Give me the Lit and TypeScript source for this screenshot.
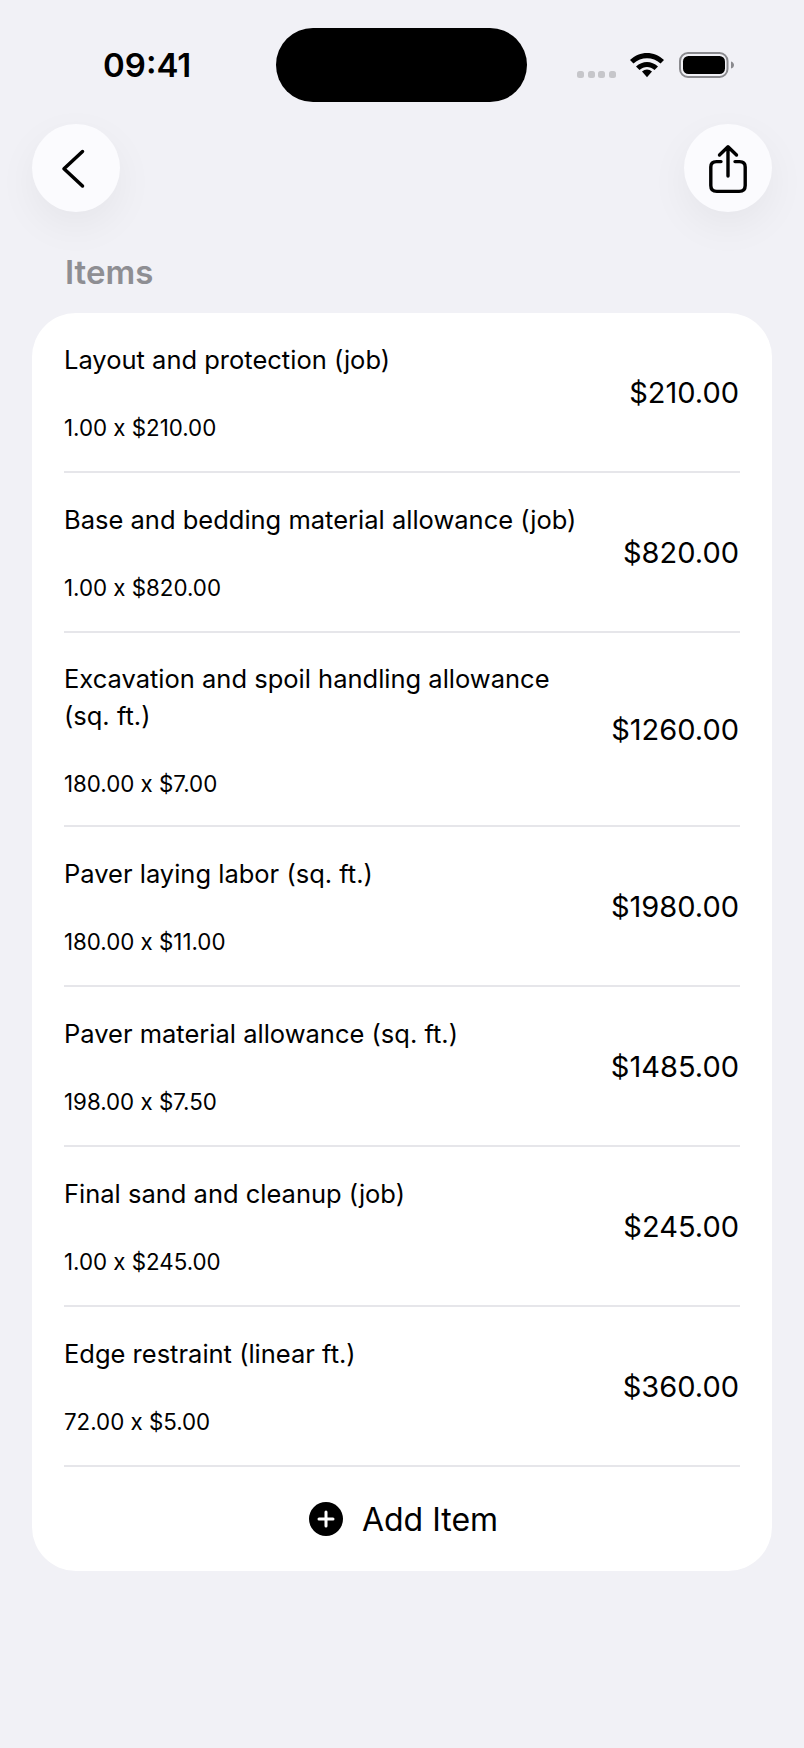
import { LitElement, html, css } from "lit";
import { customElement } from "lit/decorators.js";

const items = [
  { t: "Layout and protection (job)", s: "1.00 x $210.00", p: "$210.00" },
  { t: "Base and bedding material allowance (job)", s: "1.00 x $820.00", p: "$820.00" },
  { t: "Excavation and spoil handling allowance (sq. ft.)", s: "180.00 x $7.00", p: "$1260.00", two: true },
  { t: "Paver laying labor (sq. ft.)", s: "180.00 x $11.00", p: "$1980.00" },
  { t: "Paver material allowance (sq. ft.)", s: "198.00 x $7.50", p: "$1485.00" },
  { t: "Final sand and cleanup (job)", s: "1.00 x $245.00", p: "$245.00" },
  { t: "Edge restraint (linear ft.)", s: "72.00 x $5.00", p: "$360.00" },
];

@customElement("app-root")
export class AppRoot extends LitElement {
  static styles = css`
    :host {
      display: block;
      width: 804px;
      height: 1748px;
      background: #f1f1f6;
      font-family: Inter, "Liberation Sans", sans-serif;
      color: #000;
      overflow: hidden;
    }
    .status {
      display: flex;
      align-items: center;
      height: 74px;
      padding: 28px 0 0 103px;
    }
    .time {
      width: 173px;
      font-size: 33px;
      font-weight: 600;
      line-height: 74px;
    }
    .island {
      width: 251px;
      height: 74px;
      border-radius: 37px;
      background: #000;
    }
    .sys {
      display: flex;
      align-items: center;
      margin-left: 50px;
    }
    .dots {
      display: flex;
      gap: 3.5px;
      margin-top: 18px;
      margin-right: 14.5px;
    }
    .dots i {
      width: 7px;
      height: 7px;
      border-radius: 2.5px;
      background: #c6c6ca;
    }
    .wifi { display: block; margin-right: 15px; }
    .battery { display: block; }
    .nav {
      display: flex;
      justify-content: space-between;
      padding: 22px 32px 0;
    }
    .circle {
      width: 88px;
      height: 88px;
      border-radius: 50%;
      background: #fbfbfe;
      box-shadow: 0 14px 40px rgba(0, 0, 0, 0.05);
      display: flex;
      align-items: center;
      justify-content: center;
    }
    .heading {
      margin: 37px 0 0 65px;
      font-size: 33px;
      font-weight: 600;
      line-height: 46px;
      color: #8e8e93;
    }
    .card {
      margin: 18px 32px 0;
      background: #fff;
      border-radius: 44px;
      padding: 0 32px;
    }
    .row {
      display: flex;
      align-items: center;
      justify-content: space-between;
      padding: 29px 0 27px;
      border-bottom: 2px solid #e6e6ea;
    }
    .row.two {
      padding: 27px 0 25px;
    }
    .left { width: 520px; }
    .title {
      font-size: 25.5px;
      line-height: 36px;
      white-space: nowrap;
    }
    .row.two .title {
      line-height: 37px;
      white-space: normal;
      max-width: 490px;
    }
    .sub {
      margin-top: 34px;
      font-size: 22.3px;
      line-height: 32px;
    }
    .price {
      font-size: 29px;
      line-height: 40px;
      margin-right: 1px;
    }
    .add {
      display: flex;
      align-items: center;
      justify-content: center;
      gap: 19px;
      height: 104px;
      padding-left: 3px;
      font-size: 32px;
    }
  `;

  render() {
    return html`
      <div class="status">
        <div class="time">09:41</div>
        <div class="island"></div>
        <div class="sys">
          <div class="dots"><i></i><i></i><i></i><i></i></div>
          <svg class="wifi" width="34" height="26" viewBox="0 0 34 26">
            <path d="M0 8C9.500 -1.500 24.500 -1.500 34 8L30.500 11.500C23 4.500 11 4.500 3.500 11.500Z" fill="#000"/>
            <path d="M6 14.500C12.500 8.500 21.500 8.500 28 14.500L24.500 18C20 14 14 14 9.500 18Z" fill="#000"/>
            <path d="M12 19.500C15 16.700 19 16.700 22 19.500L17 25.300Z" fill="#000"/>
          </svg>
          <svg class="battery" width="56" height="26" viewBox="0 0 56 26">
            <rect x="1" y="1" width="47.500" height="24" rx="8" fill="none" stroke="#8a8a8e" stroke-width="2"/>
            <rect x="4" y="4" width="42" height="18" rx="5.500" fill="#000"/>
            <path d="M52 9.500C54 10 55 11.500 55 13C55 14.500 54 16 52 16.500Z" fill="#8a8a8e"/>
          </svg>
        </div>
      </div>
      <div class="nav">
        <div class="circle">
          <svg width="88" height="88" viewBox="0 0 88 88">
            <path d="M50.500 27.500L32 44.700L50.500 62" fill="none" stroke="#000" stroke-width="3.500" stroke-linecap="round" stroke-linejoin="round"/>
          </svg>
        </div>
        <div class="circle">
          <svg width="88" height="88" viewBox="0 0 88 88">
            <path d="M37 37.600H32.500C28.800 37.600 26.800 39.500 26.800 43V61.500C26.800 65.500 28.800 67.400 32.800 67.400H55.200C59.200 67.400 61.200 65.500 61.200 61.500V43C61.200 39.500 59.200 37.600 55.500 37.600H51" fill="none" stroke="#000" stroke-width="3.400" stroke-linecap="round"/>
            <path d="M44 52V23.500M35.500 31L44 22.800L52.500 31" fill="none" stroke="#000" stroke-width="3.400" stroke-linecap="round" stroke-linejoin="round"/>
          </svg>
        </div>
      </div>
      <div class="heading">Items</div>
      <div class="card">
        ${items.map(
          (i) => html`
            <div class="row ${i.two ? "two" : ""}">
              <div class="left">
                <div class="title">${i.t}</div>
                <div class="sub">${i.s}</div>
              </div>
              <div class="price">${i.p}</div>
            </div>
          `
        )}
        <div class="add">
          <svg width="34" height="34" viewBox="0 0 34 34">
            <circle cx="17" cy="17" r="17" fill="#000"/>
            <path d="M10 17H24M17 10V24" stroke="#fff" stroke-width="3" stroke-linecap="round"/>
          </svg>
          <span>Add Item</span>
        </div>
      </div>
    `;
  }
}
